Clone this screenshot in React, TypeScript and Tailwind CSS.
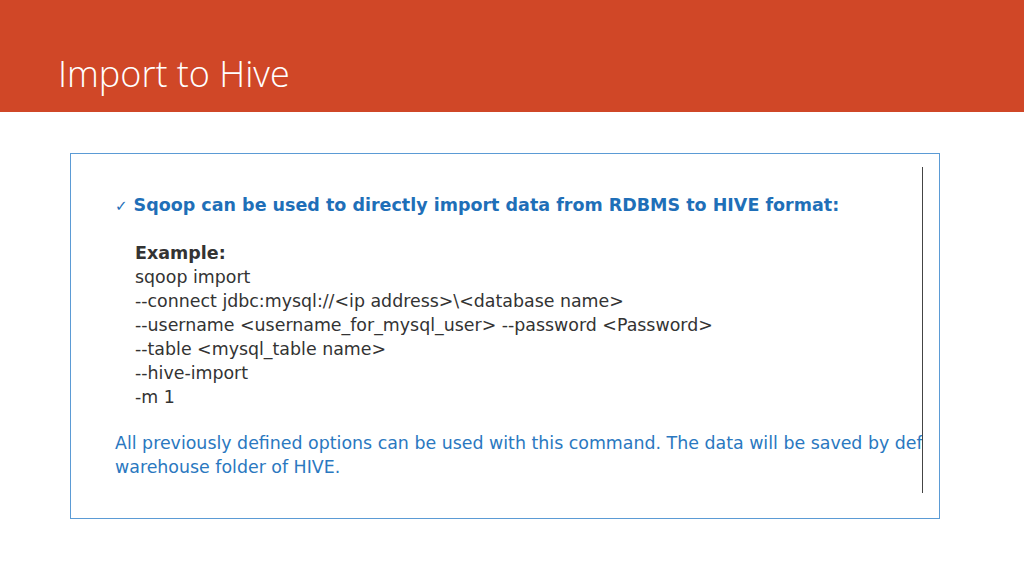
export default function App() {
  const f = { fontFamily: '"DejaVu Sans", Verdana, sans-serif' };
  return (
    <div className="w-[1024px] h-[576px] bg-white overflow-hidden">
      <div className="h-[112px] bg-[#d04727] flex items-end pl-[58px] pb-[20px]">
        <h1 className="text-white text-[36px] font-light leading-none" style={{ fontFamily: '"Open Sans", sans-serif' }}>Import to Hive</h1>
      </div>
      <div className="ml-[70px] mt-[41px] w-[870px] h-[366px] border border-[#5b9bd5] pt-[13px]">
        <div className="w-[852px] h-[326px] border-r border-[#444] overflow-hidden whitespace-nowrap text-[17.4px] leading-[24px] text-[#333]" style={f}>
          <div className="pl-[44px] pt-[26px] text-[#1f6fb8] font-bold text-[17.5px]">
            <span className="font-normal text-[15px] mr-[6px]">✓</span>Sqoop can be used to directly import data from RDBMS to HIVE format:
          </div>
          <div className="pl-[64px] pt-[23px]">
            <div className="font-bold text-[17.5px]">Example:</div>
            <div>sqoop import</div>
            <div>--connect jdbc:mysql://&lt;ip address&gt;\&lt;database name&gt;</div>
            <div>--username &lt;username_for_mysql_user&gt; --password &lt;Password&gt;</div>
            <div>--table &lt;mysql_table name&gt;</div>
            <div>--hive-import</div>
            <div>-m 1</div>
          </div>
          <div className="pl-[44px] pt-[22px] text-[#2a78c0]">
            <div>All previously defined options can be used with this command. The data will be saved by defa</div>
            <div>warehouse folder of HIVE.</div>
          </div>
        </div>
      </div>
    </div>
  );
}
